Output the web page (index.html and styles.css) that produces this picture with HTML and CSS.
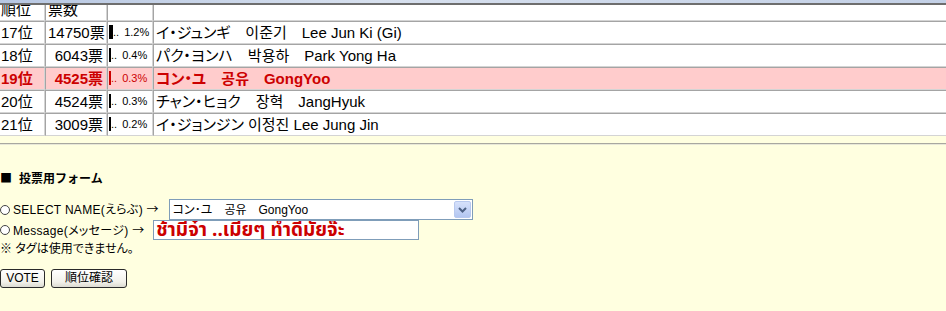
FILE: index.html
```html
<!DOCTYPE html>
<html lang="ja">
<head>
    <meta charset="UTF-8">
    <title>投票ランキング</title>
    <link rel="stylesheet" href="styles.css">
</head>
<body>

<div class="topbar"></div>
<div class="scroller">
    <table class="rank">
        <tr>
            <td class="c1">順位</td>
            <td class="c2 left">票数</td>
            <td class="c3"></td>
            <td class="c4"></td>
        </tr>
        <tr>
            <td class="c1">17位</td>
            <td class="c2">14750票</td>
            <td class="c3"><span class="bar" style="width:4px"></span>..<span class="pct">1.2%</span></td>
            <td class="c4">イ・ジュンギ　이준기　Lee Jun Ki (Gi)</td>
        </tr>
        <tr>
            <td class="c1">18位</td>
            <td class="c2">6043票</td>
            <td class="c3"><span class="bar" style="width:2px"></span>..<span class="pct">0.4%</span></td>
            <td class="c4">パク・ヨンハ　박용하　Park Yong Ha</td>
        </tr>
        <tr class="me">
            <td class="c1">19位</td>
            <td class="c2">4525票</td>
            <td class="c3"><span class="bar" style="width:2px"></span>..<span class="pct">0.3%</span></td>
            <td class="c4">コン・ユ　공유　GongYoo</td>
        </tr>
        <tr>
            <td class="c1">20位</td>
            <td class="c2">4524票</td>
            <td class="c3"><span class="bar" style="width:2px"></span>..<span class="pct">0.3%</span></td>
            <td class="c4">チャン・ヒョク　장혁　JangHyuk</td>
        </tr>
        <tr>
            <td class="c1">21位</td>
            <td class="c2">3009票</td>
            <td class="c3"><span class="bar" style="width:2px"></span>..<span class="pct">0.2%</span></td>
            <td class="c4">イ・ジョンジン 이정진 Lee Jung Jin</td>
        </tr>
    </table>
</div>

<div class="rule"></div>

<form class="vote" onsubmit="return false">
    <p class="ttl"><span class="sq">■</span>投票用フォーム</p>
    <div class="line first">
        <input type="radio" name="mode" class="rad">
        <span class="lbl">SELECT NAME(えらぶ) <span class="arr">→</span></span>
        <div class="selbox">
            <span class="seltext">コン･ユ　공유　GongYoo</span>
            <span class="selbtn">
                <svg width="9" height="6" viewBox="0 0 9 6"><path d="M1 1 L4.5 4.5 L8 1" fill="none" stroke="#4d6185" stroke-width="2"/></svg>
            </span>
        </div>
    </div>
    <div class="line">
        <input type="radio" name="mode" class="rad">
        <span class="lbl">Message(メッセージ) <span class="arr">→</span></span>
        <input type="text" class="msg" value="ช้ามีจ๋า ..เมียๆ ทำดีมั๊ยจ๊ะ">
    </div>
    <div class="note">※ タグは使用できません。</div>
    <div class="btns">
        <button class="btn b1">VOTE</button>
        <button class="btn b2">順位確認</button>
    </div>
</form>

</body>
</html>
```

FILE: styles.css
```css
body{
    margin:0;
    background-color:#ffffe0;
    font-family:"Liberation Sans","Noto Sans CJK JP",sans-serif;
    font-feature-settings:"palt";
    color:#000;
}

.topbar {
    height:3px;
    background:linear-gradient(to right,#b7c7e2,#d7e0ee 40%,#c3d0e6);
    border-bottom:2px solid #6e6e6e;
}

.scroller {
    overflow:hidden;
}

.rank {
    width:100%;
    margin-top:-7px;
    table-layout:fixed;
    border-collapse:separate;
    border-spacing:0;
    background:#fff;
    font-size:15px;
    line-height:21px;
}
.rank td {
    box-sizing:border-box;
    height:23px;
    padding:0 2px;
    border-top:1px solid #a4a4a4;
    border-bottom:1px solid #d4d4d4;
    border-left:1px solid #a4a4a4;
    border-right:1px solid #d4d4d4;
    white-space:nowrap;
    overflow:hidden;
}
.rank td.c1 { width:45px; border-left:none; padding-left:1px; }
.rank td.c2 { width:62px; text-align:right; padding-right:3px; }
.rank td.c2.left { text-align:left; }
.rank td.c3 { width:46px; font-size:11px; padding-left:1px; }
.rank td.c4 { border-right:none; }

.bar {
    display:inline-block;
    height:14px;
    background:#000;
    vertical-align:-3px;
}
.pct { margin-left:5px; }

.rank tr.me td {
    background:#ffcccc;
    color:#cc0000;
    font-weight:bold;
}
.rank tr.me td.c3 { font-weight:normal; }
.rank tr.me .bar { background:#cc0000; }

.rule {
    margin-top:7px;
    border-top:1px solid #a8a8a0;
    border-bottom:1px solid #e8e8d8;
}

.vote {
    margin:0;
    font-size:12px;
}
.ttl {
    margin:25px 0 0 0;
    font-weight:bold;
    line-height:16px;
    font-feature-settings:normal;
}
.sq {
    font-family:"Noto Sans CJK JP",sans-serif;
    margin-right:7px;
}
.line {
    display:flex;
    align-items:center;
    line-height:16px;
    white-space:nowrap;
}
.line.first { margin-top:12px; }
.lbl { letter-spacing:0.3px; }
.arr {
    font-family:"Noto Sans CJK JP",sans-serif;
    font-feature-settings:normal;
    letter-spacing:0;
}

.rad {
    appearance:none;
    margin:0 3px 0 0;
    width:10px;
    height:10px;
    border:1px solid #444;
    border-radius:50%;
    background:#fff;
}

.selbox {
    box-sizing:border-box;
    margin-left:10px;
    width:304px;
    height:21px;
    border:1px solid #7f9db9;
    background:#fff;
    display:flex;
    align-items:center;
    justify-content:space-between;
    padding:0 1px 0 3px;
}
.selbtn {
    box-sizing:border-box;
    width:17px;
    height:17px;
    border:1px solid #b8c9ef;
    border-radius:2px;
    background:linear-gradient(#d6e1fb,#b3c6f1);
    display:flex;
    align-items:center;
    justify-content:center;
}

.msg {
    box-sizing:border-box;
    margin-left:9px;
    width:266px;
    height:20px;
    border:1px solid #7f9db9;
    padding:0 2px;
    font-family:"Noto Sans Thai","Noto Sans","DejaVu Sans",sans-serif;
    font-size:19px;
    font-weight:bold;
    color:#cc0000;
    background:#fff;
}

.note {
    line-height:18px;
}

.btns {
    margin-top:11px;
    display:flex;
    gap:6px;
}
.btn {
    height:19px;
    padding:0;
    font-family:"Liberation Sans","Noto Sans CJK JP",sans-serif;
    font-size:12px;
    line-height:15px;
    color:#000;
    border:1px solid #2a2a2a;
    border-radius:3px;
    background:linear-gradient(#ffffff,#f2f1ea 70%,#dcdbd2);
}
.b1 { width:45px; }
.b2 { width:76px; }
```
